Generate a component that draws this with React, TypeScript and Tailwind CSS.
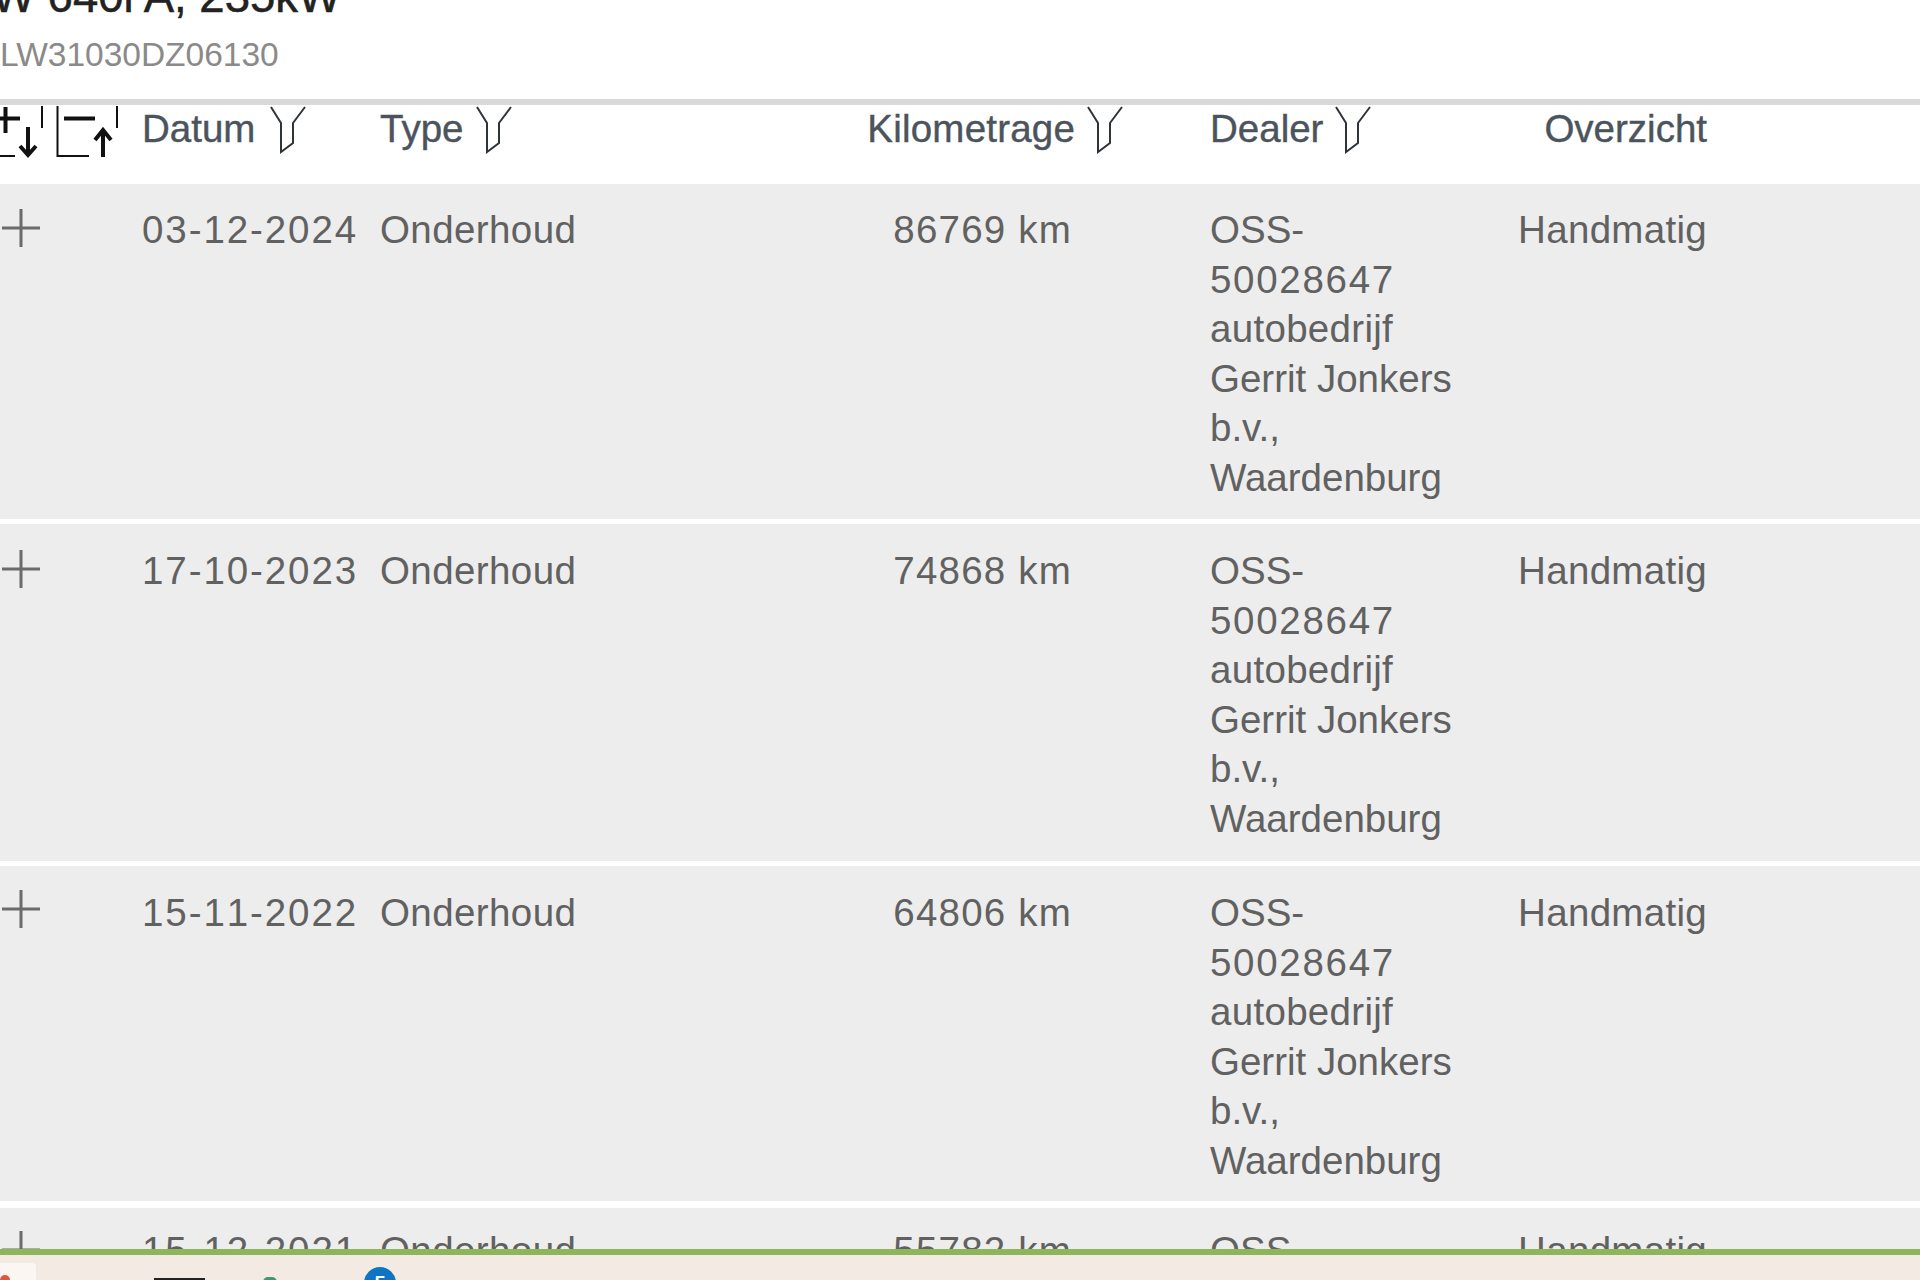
const FONT = "font-['Liberation_Sans',Arial,sans-serif]";
const GRID = "grid grid-cols-[142px_238px_420px_272px_398px_237px]";

function Filter() {
  return (
    <svg width="36" height="48" viewBox="0 0 36 48" fill="none" stroke="#2f343a" strokeWidth="2" className="shrink-0">
      <path d="M1 1 L11 17 L11 46 L23 37 L23 17 L35 1" />
    </svg>
  );
}

function SortIcons() {
  return (
    <svg width="122" height="54" viewBox="0 0 122 54" fill="none" stroke="#111" className="block">
      <path d="M0 13.500 H20 M5.500 2 V28" strokeWidth="4" />
      <path d="M0 51 H15" strokeWidth="2" />
      <path d="M28 22 V48" strokeWidth="4" />
      <path d="M20 41 L28 50 L36 41" strokeWidth="4" />
      <path d="M42 1 V23" strokeWidth="2" />
      <path d="M57.500 1 V51 H89" strokeWidth="2" />
      <path d="M64 13.500 H95" strokeWidth="4" />
      <path d="M103 52 V26" strokeWidth="4" />
      <path d="M95 35 L103 25 L111 35" strokeWidth="4" />
      <path d="M117 1 V23" strokeWidth="2" />
    </svg>
  );
}

function Plus() {
  return (
    <svg width="38" height="38" viewBox="0 0 38 38" stroke="#6b6b6b" strokeWidth="3" className="block">
      <path d="M0 19 H38 M19 0 V38" />
    </svg>
  );
}

type Row = { date: string; km: string; box: string; plus: string };
const rows: Row[] = [
  { date: "03-12-2024", km: "86769 km", box: "pt-[21px] pb-[17px] mb-[5px]", plus: "pt-[4px]" },
  { date: "17-10-2023", km: "74868 km", box: "pt-[22px] pb-[18px] mb-[5px]", plus: "pt-[4px]" },
  { date: "15-11-2022", km: "64806 km", box: "pt-[22px] pb-[16px] mb-[7px]", plus: "pt-[2px]" },
  { date: "15-12-2021", km: "55782 km", box: "pt-[18px] pb-[16px]", plus: "pt-[5px]" },
];

function HeaderCell({ label, gap }: { label: string; gap: string }) {
  return (
    <div className={`flex items-start ${gap}`}>
      <span className="-mt-[1px]">{label}</span>
      <span className="mt-[1px]">
        <Filter />
      </span>
    </div>
  );
}

function DataRow({ row }: { row: Row }) {
  return (
    <div className={`${GRID} ${row.box} bg-[#ededed] text-[38.500px] leading-[49.500px] text-[#616161]`}>
      <div className={`pl-[2px] ${row.plus}`}>
        <Plus />
      </div>
      <div className="w-[216px] text-right tracking-[1.900px] [font-kerning:none]">{row.date}</div>
      <div className="tracking-[0.400px]">Onderhoud</div>
      <div className="text-right tracking-[1.200px]">{row.km}</div>
      <div className="pl-[138px] w-[398px]">
        <div className="w-[255px]">
          OSS-<wbr />
          <span className="tracking-[1.700px]">50028647</span> <span className="tracking-[0.300px]">autobedrijf</span> Gerrit Jonkers b.v., Waardenburg
        </div>
      </div>
      <div className="text-right tracking-[0.300px]">Handmatig</div>
    </div>
  );
}

export default function App() {
  return (
    <div className={`${FONT} w-[1920px] h-[1280px] overflow-hidden flex flex-col bg-white`}>
      <div className="h-[99px] shrink-0 overflow-hidden">
        <div className="-mt-[31px] -ml-[8px] text-[45.500px] leading-[56px] text-[#222] whitespace-nowrap [-webkit-text-stroke:0.5px_#222]">
          W 640i A, 235kW
        </div>
        <div className="mt-[10px] text-[33.500px] leading-[40px] text-[#8a8a8a] whitespace-nowrap">
          LW31030DZ06130
        </div>
      </div>
      <div className="h-[6px] shrink-0 bg-[#d9d9d9]" />
      <div className="flex-1 min-h-0 overflow-hidden">
        <div className={`${GRID} h-[79px] text-[38.500px] leading-[49.500px] text-[#4b545c] [-webkit-text-stroke:0.4px_#4b545c]`}>
          <div>
            <SortIcons />
          </div>
          <HeaderCell label="Datum" gap="gap-[15px]" />
          <HeaderCell label="Type" gap="gap-[13px]" />
          <div className="flex justify-end items-start gap-3">
            <span className="-mt-[1px] tracking-[0.200px]">Kilometrage</span>
            <span className="mt-[1px] -mr-[51px]">
              <Filter />
            </span>
          </div>
          <div className="pl-[138px]">
            <HeaderCell label="Dealer" gap="gap-[12px]" />
          </div>
          <div className="text-right -mt-[1px]">Overzicht</div>
        </div>
        {rows.map((r) => (
          <DataRow key={r.date} row={r} />
        ))}
      </div>
      <div className="h-[6px] shrink-0 bg-[#8db65c]" />
      <div className="h-[25px] shrink-0 bg-[#f3ebe3] relative overflow-hidden">
        <div className="absolute left-0 top-[8px] w-[36px] h-[30px] rounded-tr-[4px] bg-[#fbf6f2]">
          <div className="absolute left-0 top-[12px] w-[10px] h-[10px] rounded-full bg-[#e2553f]" />
        </div>
        <div className="absolute left-[154px] top-[23px] w-[51px] h-[6px] bg-[#222]" />
        <div className="absolute left-[263px] top-[22px] w-[14px] h-[10px] rounded-full bg-[#3f9a6b]" />
        <div className="absolute left-[364px] top-[12px] w-[32px] h-[32px] rounded-full bg-[#0f74c4] text-white text-[20px] leading-[32px] text-center font-bold">
          5
        </div>
      </div>
    </div>
  );
}
